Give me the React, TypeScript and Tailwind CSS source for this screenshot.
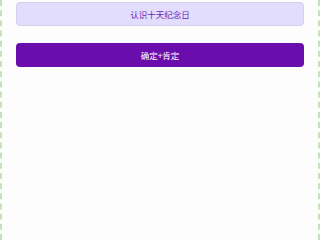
export default function App() {
  return (
    <div
      className="w-[320px] h-[240px] bg-[#fdfdfd] border-x-2 border-dashed border-[#c6e2bd] px-[14px] overflow-hidden"
      style={{ fontFamily: '"Noto Sans CJK SC", "Noto Sans", sans-serif' }}
    >
      <div className="mt-[2px] h-[24px] rounded-[4px] border border-[#d4d0ea] bg-[#e2ddfd] flex items-center justify-center text-[8.5px] text-[#6b22b3]">
        认识十天纪念日
      </div>
      <div className="mt-[17px] h-[24px] rounded-[4px] bg-[#6a0dad] flex items-center justify-center text-[8.5px] text-white">
        确定+肯定
      </div>
    </div>
  );
}
